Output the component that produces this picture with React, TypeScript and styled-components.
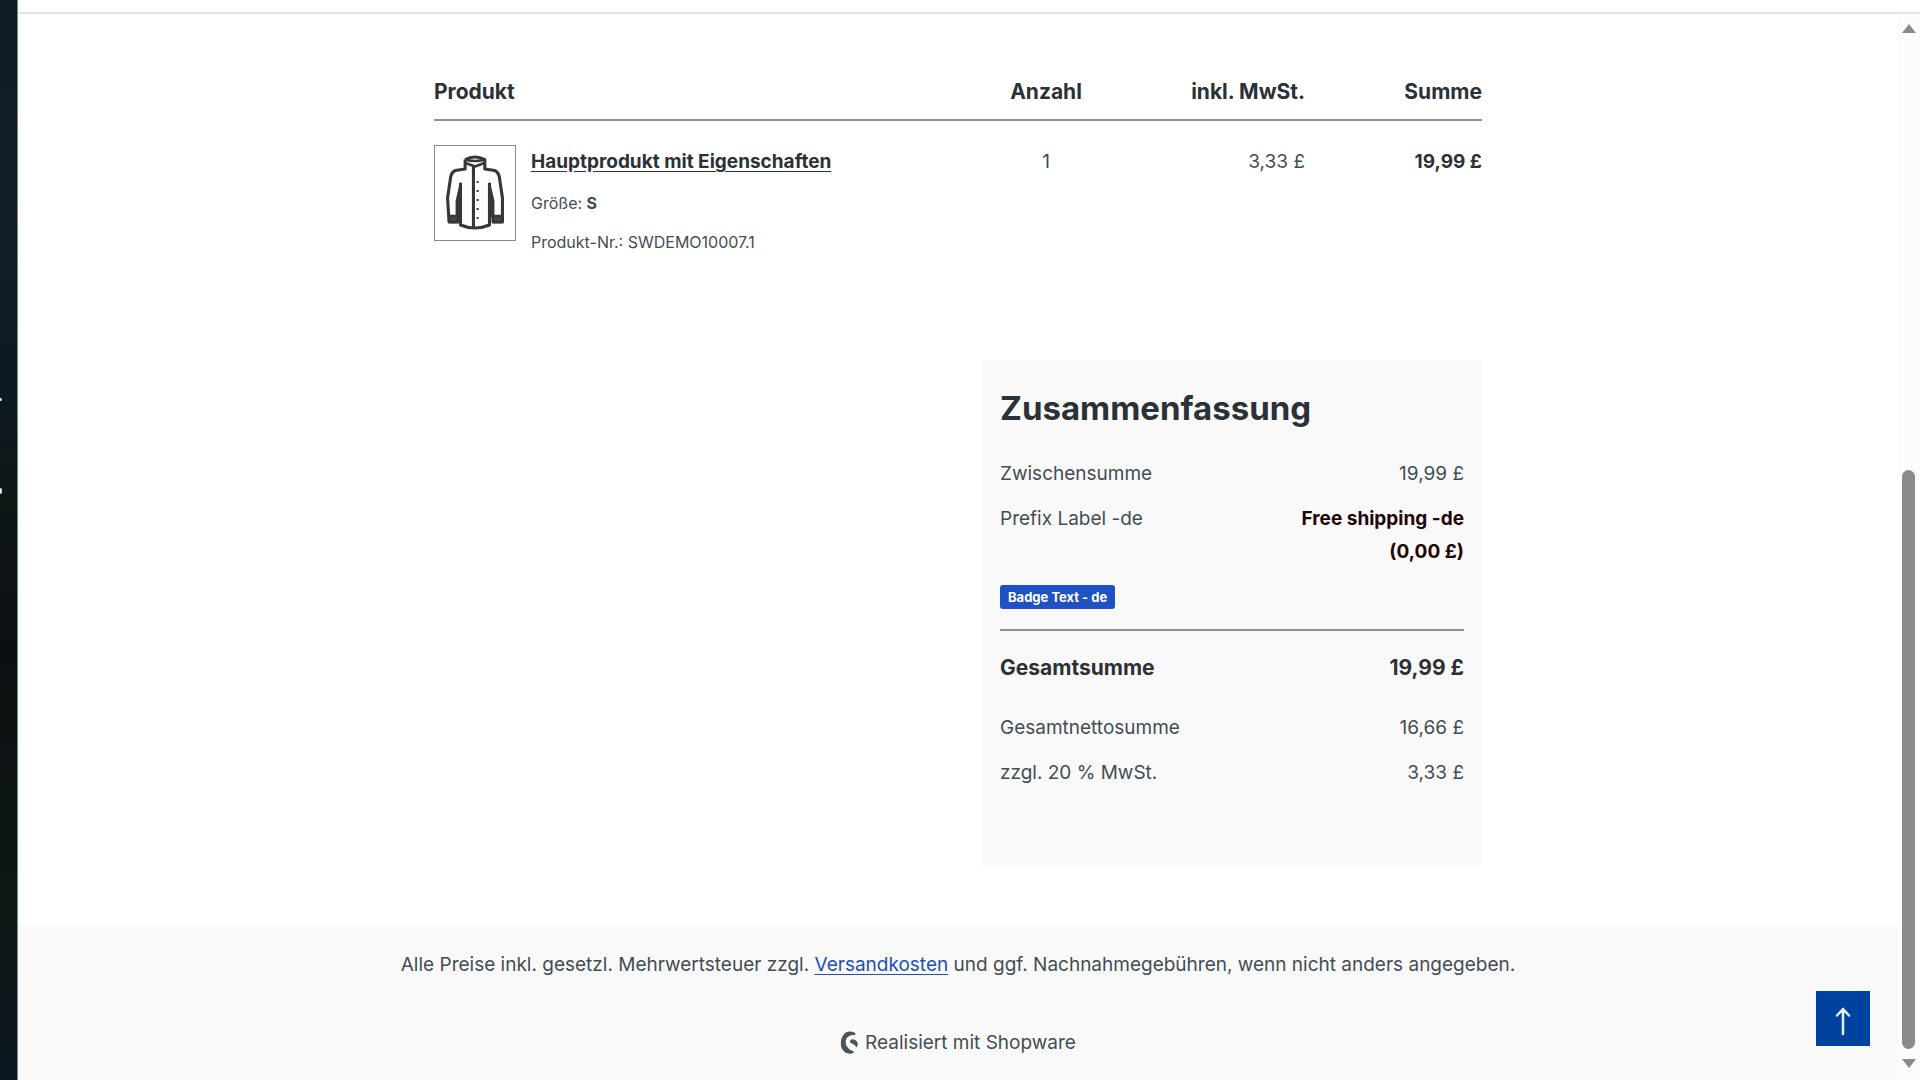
import React from "react";
import styled, { createGlobalStyle } from "styled-components";

const Global = createGlobalStyle`
  *, *::before, *::after { box-sizing: border-box; }
  body {
    margin: 0;
    background: #fff;
    color: #434d54;
    font-family: Inter, "Liberation Sans", sans-serif;
    font-size: 19px;
    line-height: 33px;
  }
`;

const Screen = styled.div`
  display: flex;
  min-height: 100vh;
`;

const Desktop = styled.aside`
  position: relative;
  flex: 0 0 18px;
  border-right: 1px solid #7c8488;
  background: linear-gradient(#0d1b27 0%, #0f1e28 20%, #0d1a26 33%, #0f1717 45%, #0b0f11 60%, #0f1816 85%, #0d1720 100%);
`;

const Glint = styled.span<{ $top: number; $tall: number }>`
  position: absolute;
  left: 0;
  top: ${(p) => p.$top}px;
  width: 2px;
  height: ${(p) => p.$tall}px;
  border-radius: 0 2px 2px 0;
  background: #e4e6e7;
`;

const Browser = styled.div`
  flex: 1;
  display: flex;
  flex-direction: column;
`;

const Toolbar = styled.div`
  height: 14px;
  border-bottom: 2px solid #e6e6e6;
`;

const View = styled.div`
  flex: 1;
  display: flex;
`;

const Page = styled.div`
  position: relative;
  flex: 1;
  display: flex;
  flex-direction: column;
`;

const Main = styled.main`
  flex: 1;
  width: 100%;
  max-width: 1048px;
  margin: 0 auto;
  padding: 61px 0 60px;
`;

const Cart = styled.table`
  width: 100%;
  border-collapse: collapse;
  table-layout: fixed;
`;

const Head = styled.th<{ $align?: string; $width?: string }>`
  width: ${(p) => p.$width || "auto"};
  padding: 0 0 11px;
  border-bottom: 2px solid #8a949e;
  text-align: ${(p) => p.$align || "left"};
  color: #2b3136;
  font-size: 21px;
  font-weight: 700;
`;

const Cell = styled.td<{ $align?: string; $bold?: boolean }>`
  padding: 24px 0 0;
  vertical-align: top;
  text-align: ${(p) => p.$align || "left"};
  ${(p) => p.$bold && "font-weight: 700; color: #2b3136;"}
`;

const Product = styled.div`
  display: flex;
  gap: 15px;
`;

const Thumb = styled.a`
  display: flex;
  align-items: center;
  justify-content: center;
  width: 82px;
  height: 96px;
  border: 1px solid #7f8c98;
`;

const Details = styled.div`
  display: flex;
  flex-direction: column;
  gap: 12px;
  font-size: 16px;
  line-height: 27px;
`;

const Name = styled.a`
  color: #2b3136;
  font-size: 19px;
  font-weight: 700;
  line-height: 33px;
  text-underline-offset: 3px;
`;

const Summary = styled.section`
  width: 500px;
  max-width: 100%;
  margin: 105px 0 0 auto;
  padding: 23px 18px 76px;
  background: #f9f9f9;
`;

const Title = styled.h2`
  margin: 0 0 25px;
  color: #2b3136;
  font-size: 33px;
  font-weight: 700;
  line-height: 48px;
`;

const Rows = styled.dl`
  display: flex;
  flex-direction: column;
  gap: 12px;
  margin: 0;
`;

const Row = styled.div`
  display: flex;
  justify-content: space-between;
`;

const Value = styled.dd<{ $bold?: boolean }>`
  max-width: 190px;
  margin: 0;
  text-align: right;
  ${(p) => p.$bold && "font-weight: 700; color: #240505;"}
`;

const Badge = styled.span`
  display: block;
  width: fit-content;
  margin: 17px 0 20px;
  padding: 0 8px;
  border-radius: 3px;
  background: #1f50c4;
  color: #fff;
  font-size: 13px;
  font-weight: 700;
  line-height: 24px;
`;

const Total = styled.div`
  display: flex;
  justify-content: space-between;
  margin-bottom: 27px;
  padding-top: 20px;
  border-top: 2px solid #8a949e;
  color: #2b3136;
  font-size: 21px;
  font-weight: 700;
`;

const Footer = styled.footer`
  display: flex;
  flex-direction: column;
  align-items: center;
  gap: 45px;
  padding: 23px 0 21px;
  background: #f9f9f9;
`;

const Notice = styled.p`
  margin: 0;
`;

const TextLink = styled.a`
  color: #1f50b4;
  text-underline-offset: 3px;
`;

const Brand = styled.div`
  display: flex;
  align-items: center;
  gap: 7px;
`;

const ToTop = styled.button`
  position: absolute;
  right: 28px;
  bottom: 34px;
  display: flex;
  align-items: center;
  justify-content: center;
  width: 54px;
  height: 55px;
  padding: 4px 0 0;
  border: 0;
  background: #0042a0;
`;

const Scrollbar = styled.div`
  flex: 0 0 22px;
  display: flex;
  flex-direction: column;
  align-items: center;
  padding: 10px 4px 12px 3px;
  background: #fcfcfc;
`;

const ScrollArea = styled.div`
  flex: 1;
  display: flex;
  flex-direction: column;
  justify-content: flex-end;
  padding-bottom: 10px;
`;

const ScrollThumb = styled.div`
  width: 13px;
  height: 57%;
  border-radius: 7px;
  background: #8b8b8b;
`;

const Jacket = () => (
  <svg width="58" height="76" viewBox="0 0 56 76" preserveAspectRatio="none" fill="none" stroke="#373737" strokeWidth="3" strokeLinejoin="round">
    <path d="M18.500 4.500Q28-.5 37.500 4.500V14L47 15.500Q50.500 17 51.500 22L54.500 43V67H45.500V60M18.500 4.500V14L9 15.500Q5.500 17 4.500 22L1.500 43L3 67H11.500V60" />
    <path d="M18.500 4.500Q28 7.500 37.500 4.500M19 8L28 11.500L37 8" strokeWidth="2.500" />
    <path d="M14 28V70Q28 76 42 70V28" />
    <path d="M14 28L10 46V62H14ZM42 28L46 46V62H42Z" fill="#373737" strokeWidth="1.500" />
    <path d="M26.500 11V73" />
    <path d="M3 61H11.500V67H3ZM45.500 61H54V67H45.500Z" fill="#4a4a4a" strokeWidth="2.500" />
    <path d="M30.500 26v2M30.500 35v2M30.500 44v2M30.500 53v2M30.500 62v2" strokeWidth="2" />
  </svg>
);

const Shopware = () => (
  <svg width="18" height="23" viewBox="0 0 18 23" fill="#4a545b" aria-hidden="true">
    <path d="M15 2C11.500 0 7.200 0 4.200 3C1 6.300 0 12 1.500 16.500C3.300 21.500 8.500 24.300 13.500 21.700C14.200 21.200 14 20.600 13.300 20.200C8.500 18.300 5.500 15 5.700 10.500C6 6 9.500 3.800 14 4C15.300 4 16 3 15 2Z" />
    <path d="M17.600 12C16.500 9 13.500 7.800 11.300 8.500C9.400 9.300 9.600 11.300 11.200 12.200C13.300 13.300 15.300 14 16.500 16.500C17.500 15.200 18 13.500 17.600 12Z" />
  </svg>
);

const Arrow = () => (
  <svg width="16" height="30" viewBox="0 0 16 30" fill="none" stroke="#e6edf7" strokeWidth="2.500" strokeLinecap="round" strokeLinejoin="round" aria-hidden="true">
    <path d="M8 28V3M2 9.500L8 3L14 9.500" />
  </svg>
);

const Caret = ({ down }: { down?: boolean }) => (
  <svg width="14" height="9" viewBox="0 0 14 9" fill="#8b8b8b" aria-hidden="true">
    <path d={down ? "M0 0H14L7 9Z" : "M0 9H14L7 0Z"} />
  </svg>
);

export default function App() {
  return (
    <>
      <Global />
      <Screen>
        <Desktop aria-hidden="true">
          <Glint $top={398} $tall={3} />
          <Glint $top={488} $tall={6} />
        </Desktop>
        <Browser>
          <Toolbar />
          <View>
            <Page>
              <Main>
                <Cart>
                  <thead>
                    <tr>
                      <Head scope="col">Produkt</Head>
                      <Head scope="col" $width="170px" $align="center">Anzahl</Head>
                      <Head scope="col" $width="174px" $align="right">inkl. MwSt.</Head>
                      <Head scope="col" $width="177px" $align="right">Summe</Head>
                    </tr>
                  </thead>
                  <tbody>
                    <tr>
                      <Cell>
                        <Product>
                          <Thumb href="#produkt" aria-label="Hauptprodukt mit Eigenschaften">
                            <Jacket />
                          </Thumb>
                          <Details>
                            <Name href="#produkt">Hauptprodukt mit Eigenschaften</Name>
                            <span>Größe: <b>S</b></span>
                            <span>Produkt-Nr.: SWDEMO10007.1</span>
                          </Details>
                        </Product>
                      </Cell>
                      <Cell $align="center">1</Cell>
                      <Cell $align="right">3,33 £</Cell>
                      <Cell $align="right" $bold>19,99 £</Cell>
                    </tr>
                  </tbody>
                </Cart>
                <Summary>
                  <Title>Zusammenfassung</Title>
                  <Rows>
                    <Row><dt>Zwischensumme</dt><Value>19,99 £</Value></Row>
                    <Row><dt>Prefix Label -de</dt><Value $bold>Free shipping -de (0,00 £)</Value></Row>
                  </Rows>
                  <Badge>Badge Text - de</Badge>
                  <Total><span>Gesamtsumme</span><span>19,99 £</span></Total>
                  <Rows>
                    <Row><dt>Gesamtnettosumme</dt><Value>16,66 £</Value></Row>
                    <Row><dt>zzgl. 20 % MwSt.</dt><Value>3,33 £</Value></Row>
                  </Rows>
                </Summary>
              </Main>
              <Footer>
                <Notice>
                  Alle Preise inkl. gesetzl. Mehrwertsteuer zzgl. <TextLink href="#versand">Versandkosten</TextLink> und ggf. Nachnahmegebühren, wenn nicht anders angegeben.
                </Notice>
                <Brand><Shopware />Realisiert mit Shopware</Brand>
              </Footer>
              <ToTop type="button" aria-label="Nach oben"><Arrow /></ToTop>
            </Page>
            <Scrollbar aria-hidden="true">
              <Caret />
              <ScrollArea><ScrollThumb /></ScrollArea>
              <Caret down />
            </Scrollbar>
          </View>
        </Browser>
      </Screen>
    </>
  );
}
